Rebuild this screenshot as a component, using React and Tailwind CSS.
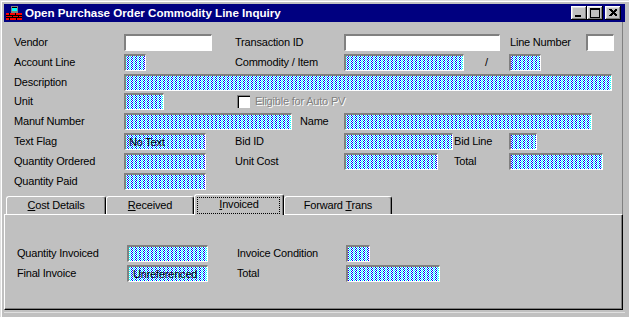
import React from 'react';

// ── Win95-style field helpers ──────────────────────────────────────────────────
// 4x2 dither brush: blue / cyan dots on white, anchored to the viewport like a Windows brush
const dither =
  'bg-white bg-[image:conic-gradient(at_1px_1px,transparent_75%,#0000ff_0),conic-gradient(at_1px_1px,transparent_75%,#0000ff_0),conic-gradient(at_1px_1px,transparent_75%,#00ffff_0),conic-gradient(at_1px_1px,transparent_75%,#00ffff_0)] bg-[length:4px_2px] [background-position:0_0,3px_1px,2px_0,1px_1px] bg-fixed';

function Box({ w, white, children }) {
  return (
    <div
      className={`${w} h-[17px] shrink-0 flex items-center pl-[2px] leading-none whitespace-nowrap ${white ? 'bg-white' : dither} border-t-2 border-l-2 border-r border-b border-t-[#808080] border-l-[#808080] border-r-white border-b-white`}
    >
      {children}
    </div>
  );
}

function Label({ w, className = '', children }) {
  return <span className={`${w} shrink-0 whitespace-nowrap leading-none ${className}`}>{children}</span>;
}

function Row({ mb = 'mb-[3px]', children }) {
  return <div className={`flex items-center h-[17px] ${mb}`}>{children}</div>;
}

function CaptionButton({ className = '', children }) {
  return (
    <div className={`w-[16px] h-[14px] bg-[#c0c0c0] shadow-[inset_-1px_-1px_#000,inset_1px_1px_#fff,inset_-2px_-2px_#808080,inset_2px_2px_#dfdfdf] ${className}`}>
      <svg width="16" height="14" viewBox="0 0 16 14" shapeRendering="crispEdges">{children}</svg>
    </div>
  );
}

function Tab({ w, selected, children }) {
  return (
    <div
      className={`${w} ${selected ? 'h-[21px] -mb-px relative z-10 pb-[2px]' : 'h-[18px]'} shrink-0 bg-[#c0c0c0] rounded-t-[3px] border-t border-l border-r border-t-white border-l-white border-r-black shadow-[inset_-1px_0_#808080] flex items-center justify-center leading-none`}
    >
      {children}
      {selected && <span className="absolute left-[2px] right-[3px] top-[2px] bottom-[1px] border border-dotted border-black" />}
    </div>
  );
}

// ── Window ─────────────────────────────────────────────────────────────────────
export default function App() {
  return (
    <div className="w-[629px] h-[317px] overflow-hidden bg-[#c0c0c0] pt-[4px] pl-[4px] shadow-[inset_1px_1px_#dfdfdf,inset_2px_2px_#fff] font-['Liberation_Sans',Arial,sans-serif] text-[11px] tracking-[-0.2px] text-black">
      {/* Title bar */}
      <div className="w-[621px] h-[18px] bg-[#000080] flex items-center pl-[2px] pr-[4px]">
        <svg width="16" height="16" viewBox="0 0 16 16" shapeRendering="crispEdges">
          <rect x="5" y="1" width="7" height="7" fill="#808080" />
          <rect x="6" y="2" width="5" height="4" fill="#00ffff" />
          <rect x="6" y="2" width="5" height="1" fill="#000" />
          <rect x="0" y="8" width="16" height="7" fill="#ff0000" />
          <rect x="0" y="10" width="16" height="1" fill="#000" />
          <rect x="0" y="12" width="16" height="1" fill="#000" />
          <rect x="3" y="8" width="1" height="2" fill="#000" />
          <rect x="9" y="8" width="1" height="2" fill="#000" />
          <rect x="6" y="11" width="1" height="1" fill="#000" />
          <rect x="12" y="11" width="1" height="1" fill="#000" />
          <rect x="3" y="13" width="1" height="2" fill="#000" />
          <rect x="10" y="13" width="1" height="2" fill="#000" />
        </svg>
        <span className="ml-[3px] text-white font-bold text-[11.6px] tracking-normal leading-none">
          Open Purchase Order Commodity Line Inquiry
        </span>
        <div className="ml-auto flex">
          <CaptionButton>
            <rect x="4" y="9" width="6" height="2" fill="#000" />
          </CaptionButton>
          <CaptionButton>
            <rect x="3" y="2" width="9" height="9" fill="none" stroke="#000" strokeWidth="1" transform="translate(0.5 0.5)" />
            <rect x="3" y="2" width="10" height="2" fill="#000" />
          </CaptionButton>
          <CaptionButton className="ml-[2px]">
            <path d="M4 3h2l2 2 2-2h2v1l-2.5 2.5L12 9v1h-2L8 8l-2 2H4V9l2.5-2.5L4 4z" fill="#000" />
          </CaptionButton>
        </div>
      </div>

      {/* Header fields */}
      <div className="w-[619px] pl-[10px] pt-[12px] border-r border-r-[#808080]">
        <Row>
          <Label w="w-[110px]">Vendor</Label>
          <Box w="w-[88px]" white />
          <Label w="w-[109px]" className="ml-[23px]">Transaction ID</Label>
          <Box w="w-[156px]" white />
          <Label w="w-[76px]" className="ml-[10px]">Line Number</Label>
          <Box w="w-[28px]" white />
        </Row>
        <Row>
          <Label w="w-[110px]">Account Line</Label>
          <Box w="w-[22px]" />
          <Label w="w-[109px]" className="ml-[89px]">Commodity / Item</Label>
          <Box w="w-[120px]" />
          <Label w="w-[45px]" className="pl-[21px]">/</Label>
          <Box w="w-[32px]" />
        </Row>
        <Row mb="mb-[2px]">
          <Label w="w-[110px]">Description</Label>
          <Box w="w-[488px]" />
        </Row>
        <Row>
          <Label w="w-[110px]">Unit</Label>
          <Box w="w-[40px]" />
          <div className="ml-[73px] w-[13px] h-[13px] shrink-0 bg-white border-t border-l border-t-[#808080] border-l-[#808080] shadow-[inset_1px_1px_#000]" />
          <span className="ml-[5px] text-[#808080] [text-shadow:1px_1px_#fff] leading-none whitespace-nowrap">Eligible for Auto PV</span>
        </Row>
        <Row>
          <Label w="w-[110px]">Manuf Number</Label>
          <Box w="w-[168px]" />
          <Label w="w-[44px]" className="ml-[8px]">Name</Label>
          <Box w="w-[248px]" />
        </Row>
        <Row>
          <Label w="w-[110px]">Text Flag</Label>
          <Box w="w-[82px]"><span className="pl-[1px]">No Text</span></Box>
          <Label w="w-[109px]" className="ml-[29px]">Bid ID</Label>
          <Box w="w-[109px]" />
          <Label w="w-[55px]" className="ml-[1px]">Bid Line</Label>
          <Box w="w-[28px]" />
        </Row>
        <Row>
          <Label w="w-[110px]">Quantity Ordered</Label>
          <Box w="w-[82px]" />
          <Label w="w-[109px]" className="ml-[29px]">Unit Cost</Label>
          <Box w="w-[94px]" />
          <Label w="w-[55px]" className="ml-[16px]">Total</Label>
          <Box w="w-[94px]" />
        </Row>
        <Row mb="mb-0">
          <Label w="w-[110px]">Quantity Paid</Label>
          <Box w="w-[82px]" />
        </Row>

        {/* Tabs */}
        <div className="-ml-[8px] mt-[4px] h-[20px] flex items-end">
          <Tab w="w-[100px]"><span><u>C</u>ost Details</span></Tab>
          <Tab w="w-[88px]"><span><u>R</u>eceived</span></Tab>
          <Tab w="w-[90px]" selected><span><u>I</u>nvoiced</span></Tab>
          <Tab w="w-[108px]"><span>Forward <u>T</u>rans</span></Tab>
        </div>
      </div>

      {/* Invoiced tab page */}
      <div className="w-[619px] h-[96px] border border-t-white border-l-white border-r-black border-b-black shadow-[inset_-1px_-1px_#808080] pl-[12px] pt-[30px]">
        <Row>
          <Label w="w-[110px]">Quantity Invoiced</Label>
          <Box w="w-[81px]" />
          <Label w="w-[109px]" className="ml-[29px]">Invoice Condition</Label>
          <Box w="w-[24px]" />
        </Row>
        <Row mb="mb-0">
          <Label w="w-[110px]">Final Invoice</Label>
          <Box w="w-[81px]"><span className="pl-[2px]">Unreferenced</span></Box>
          <Label w="w-[109px]" className="ml-[29px]">Total</Label>
          <Box w="w-[94px]" />
        </Row>
      </div>
      <div className="w-[621px] h-px mt-[2px] bg-[#dfdfdf]" />
    </div>
  );
}
